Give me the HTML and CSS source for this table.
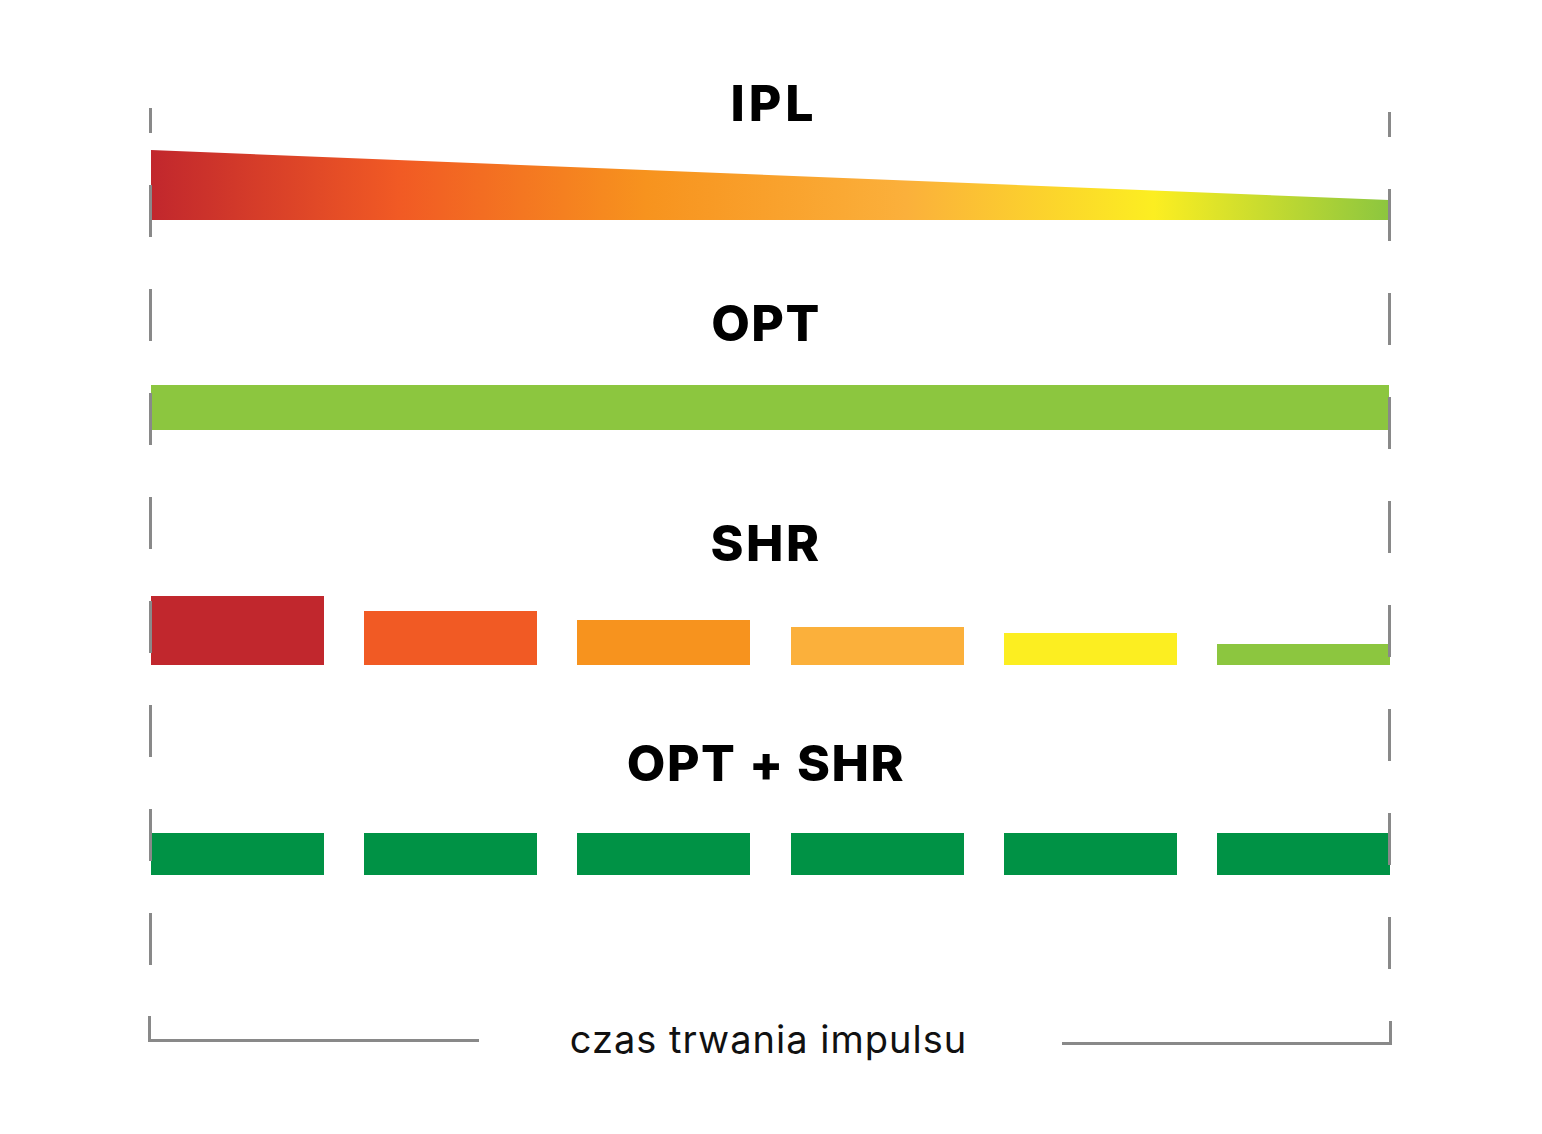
FILE: index.html
```html
<!DOCTYPE html>
<html lang="pl">
<head>
<meta charset="utf-8">
<title>IPL / OPT / SHR</title>
<link rel="stylesheet" href="styles.css">
</head>
<body>
<div class="diagram">
  <h2 class="title t-ipl">IPL</h2>
  <div class="ipl-bar"></div>

  <h2 class="title t-opt">OPT</h2>
  <div class="opt-bar"></div>

  <h2 class="title t-shr">SHR</h2>
  <div class="pulses shr">
    <div class="pulse p1" style="height:69px"></div>
    <div class="pulse p2" style="height:54px"></div>
    <div class="pulse p3" style="height:45px"></div>
    <div class="pulse p4" style="height:38px"></div>
    <div class="pulse p5" style="height:32px"></div>
    <div class="pulse p6" style="height:21px"></div>
  </div>

  <h2 class="title t-optshr">OPT + SHR</h2>
  <div class="pulses optshr">
    <div class="pulse g"></div>
    <div class="pulse g"></div>
    <div class="pulse g"></div>
    <div class="pulse g"></div>
    <div class="pulse g"></div>
    <div class="pulse g"></div>
  </div>

  <div class="footer">
    <div class="bracket left"></div>
    <div class="caption">czas trwania impulsu</div>
    <div class="bracket right"></div>
  </div>

  <div class="guide guide-left"></div>
  <div class="guide guide-right"></div>
</div>
</body>
</html>
```

FILE: styles.css
```css
html, body {
  margin: 0;
  padding: 0;
  background: #ffffff;
}

body {
  width: 1542px;
  height: 1134px;
  overflow: hidden;
  font-family: "Inter", "Liberation Sans", sans-serif;
  color: #000;
}

.diagram {
  position: relative;
  width: 1238px;
  margin-left: 151px;
  padding-top: 78px;
  display: flex;
  flex-direction: column;
}

.title {
  margin: 0;
  height: 50px;
  font-size: 50px;
  line-height: 50px;
  font-weight: 800;
  text-align: center;
  letter-spacing: 1.5px;
  padding-right: 8px;
}

.t-ipl {
  letter-spacing: 4px;
  padding-right: 0;
  padding-left: 8px;
}
.t-opt { margin-top: 78px; }
.t-shr { margin-top: 88px; letter-spacing: 2.5px; }
.t-optshr { margin-top: 73px; }

.ipl-bar {
  margin-top: 22px;
  height: 70px;
  background: linear-gradient(90deg,
    #c1272d 0%,
    #f15a24 20%,
    #f7931e 40%,
    #fbb03b 61%,
    #fcee21 81%,
    #8cc63f 100%);
  clip-path: polygon(0 0, 100% 50px, 100% 100%, 0 100%);
}

.opt-bar {
  margin-top: 37px;
  height: 45px;
  background: #8cc63f;
}

.pulses {
  display: flex;
  justify-content: space-between;
  align-items: flex-end;
}

.pulses.shr {
  margin-top: 28px;
  height: 69px;
}

.pulses.optshr {
  margin-top: 45px;
  height: 42px;
}

.pulse {
  width: 173px;
}

.p1 { background: #c1272d; }
.p2 { background: #f15a24; }
.p3 { background: #f7931e; }
.p4 { background: #fbb03b; }
.p5 { background: #fcee21; }
.p6 { background: #8cc63f; margin-right: -1px; }

.pulse.g {
  height: 42px;
  background: #009245;
}
.pulse.g:last-child { margin-right: -1px; }

.footer {
  margin-top: 141px;
  margin-left: -3px;
  width: 1244px;
  display: grid;
  grid-template-columns: 331px 1fr 330px;
  align-items: start;
}

.bracket {
  box-sizing: border-box;
  border-bottom: 3px solid #898989;
}

.bracket.left {
  height: 26px;
  border-left: 3px solid #898989;
}

.bracket.right {
  margin-top: 5px;
  height: 24px;
  border-right: 3px solid #898989;
}

.caption {
  margin-top: 3px;
  padding-right: 4px;
  font-size: 38px;
  line-height: 40px;
  font-weight: 400;
  text-align: center;
  letter-spacing: 1px;
  color: #111;
}

.guide {
  position: absolute;
  width: 3px;
  height: 857px;
  background-image: linear-gradient(#898989 0 52px, transparent 52px 104px);
  background-size: 3px 104px;
  background-repeat: repeat-y;
  background-position: 0 77px;
  z-index: 2;
}

.guide-left {
  left: -2px;
  top: 108px;
}

.guide-right {
  right: -2px;
  top: 112px;
}
```
